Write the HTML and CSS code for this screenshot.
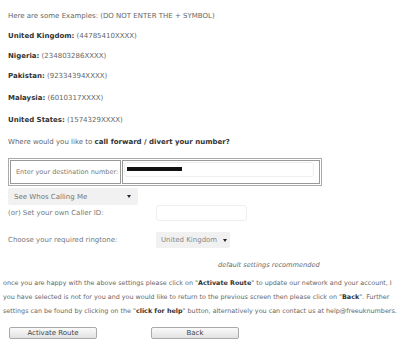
FILE: index.html
```html
<!DOCTYPE html>
<html>
<head>
  <meta charset="utf-8" />
  <title>Divert your number</title>
  <link rel="stylesheet" href="styles.css">
</head>
<body>
<div class="page">
  <div class="examples">
    <p>Here are some Examples: (DO NOT ENTER THE + SYMBOL)</p>
    <p><b>United Kingdom:</b> (44785410XXXX)</p>
    <p><b>Nigeria:</b> (234803286XXXX)</p>
    <p><b>Pakistan:</b> (92334394XXXX)</p>
    <p class="wide"><b>Malaysia:</b> (6010317XXXX)</p>
    <p class="wide"><b>United States:</b> (1574329XXXX)</p>
    <p class="wide">Where would you like to <b>call forward / divert your number?</b></p>
  </div>

  <table class="destBox">
    <tr>
      <td class="destLabel">Enter your destination number:</td>
      <td class="destCell"><div class="destInput"><span class="masked"></span></div></td>
    </tr>
  </table>

  <div class="callerSelect">See Whos Calling Me <span class="caret"></span></div>

  <div class="row callerRow">
    <span class="rowLabel">(or) Set your own Caller ID:</span>
    <div class="textInput"></div>
  </div>

  <div class="row ringRow">
    <span class="rowLabel">Choose your required ringtone:</span>
    <div class="ringSelect">United Kingdom <span class="caret"></span></div>
  </div>

  <div class="note">default settings recommended</div>

  <p class="info">once you are happy with the above settings please click on "<b>Activate Route</b>" to update our network and your account, I<br>you have selected is not for you and you would like to return to the previous screen then please click on "<b>Back</b>". Further<br>settings can be found by clicking on the "<b>click for help</b>" button, alternatively you can contact us at help@freeuknumbers.</p>

  <div class="buttons">
    <button class="btn">Activate Route</button>
    <button class="btn">Back</button>
  </div>
</div>
</body>
</html>
```

FILE: styles.css
```css
body {
  margin: 0;
  background: #fff;
  font-family: "DejaVu Sans", Verdana, sans-serif;
  font-size: 7px;
  color: #666;
  overflow: hidden;
}

.page {
  width: 400px;
  height: 346px;
  overflow: hidden;
}

.examples {
  padding: 12px 0 0 8px;
}

.examples p {
  margin: 0 0 11px 0;
  line-height: 9px;
}

.examples p.wide {
  margin-top: 13px;
}

.examples b {
  color: #333;
}

.destBox {
  margin: 1px 0 0 8px;
  width: 314px;
  height: 28px;
  border: 1px solid #aaa;
  border-collapse: separate;
  border-spacing: 1px;
}

.destBox td {
  border: 1px solid #999;
  padding: 0;
}

.destLabel {
  width: 104px;
  padding-left: 5px !important;
  white-space: nowrap;
  font-size: 6.5px;
  color: #777;
}

.destCell {
  padding: 0 5px 6px 1px !important;
}

.destInput {
  height: 13px;
  border: 1px solid #eee;
  border-radius: 3px;
  display: flex;
  align-items: center;
  padding-left: 2px;
}

.masked {
  width: 55px;
  height: 4px;
  background: #111;
}

.callerSelect {
  margin: 2px 0 0 8px;
  width: 130px;
  height: 17px;
  background: #f1f1f1;
  border-radius: 2px;
  display: flex;
  align-items: center;
  justify-content: space-between;
  padding: 0 7px 0 6px;
  box-sizing: border-box;
  color: #777;
}

.caret {
  width: 0;
  height: 0;
  border-left: 2.5px solid transparent;
  border-right: 2.5px solid transparent;
  border-top: 3px solid #223;
}

.row {
  display: flex;
  align-items: center;
  margin-left: 8px;
}

.callerRow {
  margin-top: 0;
}

.ringRow {
  margin-top: 11px;
}

.rowLabel {
  width: 148px;
  color: #777;
}

.textInput {
  width: 91px;
  height: 16px;
  border: 1px solid #eee;
  border-radius: 3px;
  box-sizing: border-box;
}

.ringSelect {
  width: 74px;
  height: 16px;
  background: #f1f1f1;
  border-radius: 2px;
  display: flex;
  align-items: center;
  gap: 6px;
  padding-left: 5px;
  box-sizing: border-box;
  color: #888;
}

.note {
  margin: 13px 0 0 218px;
  font-size: 6.6px;
  font-style: italic;
  color: #666;
}

.info {
  margin: 7px 0 0 3px;
  white-space: nowrap;
  font-size: 6.4px;
  line-height: 14px;
}

.info b {
  color: #333;
}

.buttons {
  display: flex;
  gap: 54px;
  margin: 9px 0 0 9px;
}

.btn {
  width: 88px;
  height: 12px;
  padding: 0;
  font-family: "DejaVu Sans", Verdana, sans-serif;
  font-size: 7px;
  line-height: 10px;
  color: #444;
  background: linear-gradient(#fafafa, #e2e2e2);
  border: 1px solid #aaa;
  border-radius: 2px;
}
```
